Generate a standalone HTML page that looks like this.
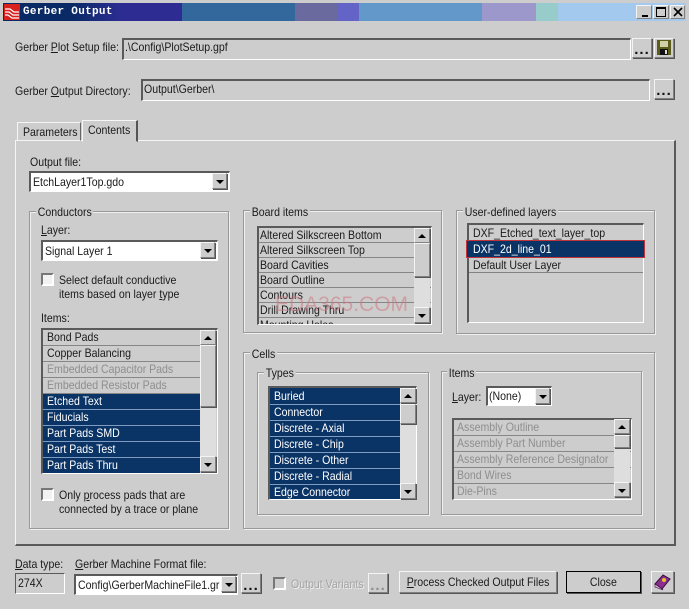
<!DOCTYPE html>
<html><head><meta charset="utf-8"><style>
html,body{margin:0;padding:0}
body{width:689px;height:609px;position:relative;overflow:hidden;background:#cdcdcd;font:12px/14px "Liberation Sans",sans-serif;color:#1a1a1a}
div{position:absolute;box-sizing:border-box}
.t{white-space:nowrap;transform:scaleX(.88);transform-origin:0 0}
.in{border:solid;border-width:2px 1px 1px 2px;border-color:#5a5a5a #fff #fff #5a5a5a;background:#cdcdcd}
.wh{background:#fff}
.btn{background:#cdcdcd;border:1px solid;border-color:#f4f4f4 #808080 #808080 #f4f4f4;box-shadow:1px 1px 0 #555}
.grp{border:1px solid #999;box-shadow:inset 1px 1px 0 #efefef,1px 1px 0 #efefef}
.lg{background:#cdcdcd;padding:0 2px;white-space:nowrap;transform:scaleX(.88);transform-origin:0 0}
.r{left:0;height:16px;width:100%;padding-left:4px;border-bottom:1px solid #868686;white-space:nowrap;line-height:15px;overflow:hidden}
.r b,.c b{font-weight:normal;display:inline-block;transform:scaleX(.88);transform-origin:0 0}
.c{white-space:nowrap;text-align:center;line-height:20px}
.c b{transform-origin:50% 0}
.s{background:#0b3466;color:#fff;border-bottom:1px solid #7f9cc0}
.d{color:#8e8e8e}
.up,.dn{position:absolute;left:50%;margin-left:-4px;width:0;height:0;border-left:4px solid transparent;border-right:4px solid transparent}
.up{top:5px;border-bottom:4px solid #000}
.dn{top:6px;border-top:4px solid #000}
.tr{background:#dedede}
.cb{width:13px;height:13px;border:2px solid;border-color:#777 #fff #fff #777;background:#f2f2f2}
u{text-decoration:underline}
.dots{font:bold 15px/13px "Liberation Sans",sans-serif;text-align:center;color:#111;letter-spacing:1px}
</style></head><body>

<!-- title bar -->
<div style="left:3px;top:3px;width:683px;height:18px;background:linear-gradient(90deg,#0a2a66 0,#0a2a66 70px,#2c2c92 117px,#2c2c92 179px,#33689c 179px,#33689c 292px,#6a6a9e 292px,#6a6a9e 335px,#6464c8 335px,#6464c8 356px,#6398cb 356px,#6398cb 479px,#9c98cc 479px,#9c98cc 533px,#98ccca 533px,#98ccca 555px,#a3c9ee 555px)"></div>
<svg style="position:absolute;left:4px;top:4px" width="16" height="16" viewBox="0 0 16 16"><rect width="16" height="16" fill="#d8201c"/><path d="M1 5h5l4 3h5M1 8h4l4 3h6M1 11h3l4 3h7" stroke="#fff" stroke-width="1.2" fill="none"/></svg>
<div style="left:23px;top:5px;white-space:nowrap;font:bold 11px/14px 'Liberation Mono',monospace;color:#fff;letter-spacing:.3px">Gerber Output</div>
<div class="btn" style="left:636px;top:5px;width:16px;height:14px;box-shadow:none"><div style="left:5px;top:9px;width:6px;height:2px;background:#000"></div></div>
<div class="btn" style="left:653px;top:5px;width:16px;height:14px;box-shadow:none"><div style="left:2px;top:1px;width:10px;height:10px;border:1px solid #000;border-top:2px solid #000"></div></div>
<div class="btn" style="left:670px;top:5px;width:15px;height:14px;box-shadow:none"><svg style="position:absolute;left:2px;top:1px" width="10" height="10"><path d="M1 1l8 8M9 1l-8 8" stroke="#000" stroke-width="1.6"/></svg></div>

<!-- top fields -->
<div class="t" style="left:15px;top:40px">Gerber <u>P</u>lot Setup file:</div>
<div class="in" style="left:122px;top:38px;width:509px;height:22px"></div>
<div class="t" style="left:125px;top:40px">.\Config\PlotSetup.gpf</div>
<div class="btn dots" style="left:632px;top:38px;width:20px;height:20px;padding-top:4px">...</div>
<div class="btn" style="left:654px;top:38px;width:20px;height:20px"></div>
<svg style="position:absolute;left:657px;top:40px" width="15" height="15" viewBox="0 0 15 15"><rect width="14" height="15" fill="#5c5c1c"/><rect x="3" y="1" width="8" height="6" fill="#cfcfa8"/><rect x="3" y="9" width="8" height="6" fill="#111"/><rect x="8" y="10" width="2" height="4" fill="#ddd"/></svg>

<div class="t" style="left:15px;top:84px">Gerber <u>O</u>utput Directory:</div>
<div class="in" style="left:141px;top:79px;width:509px;height:22px"></div>
<div class="t" style="left:144px;top:82px">Output\Gerber\</div>
<div class="btn dots" style="left:654px;top:79px;width:20px;height:20px;padding-top:4px">...</div>

<!-- tab panel -->
<div style="left:15px;top:140px;width:661px;height:406px;border:1px solid;border-color:#f6f6f6 #5a5a5a #5a5a5a #f6f6f6;border-width:1px 2px 2px 1px"></div>
<div style="left:17px;top:122px;width:64px;height:19px;border:1px solid;border-color:#f6f6f6 #666 #f6f6f6 #f6f6f6;background:#cdcdcd"></div>
<div class="t" style="left:23px;top:125px">Parameters</div>
<div style="left:82px;top:120px;width:56px;height:22px;border:1px solid;border-color:#f6f6f6 #555 #cdcdcd #f6f6f6;border-right-width:2px;background:#cdcdcd"></div>
<div class="t" style="left:88px;top:123px">Contents</div>

<!-- output file -->
<div class="t" style="left:30px;top:155px">Output file:</div>
<div class="in wh" style="left:29px;top:171px;width:201px;height:21px"></div>
<div class="t" style="left:33px;top:175px">EtchLayer1Top.gdo</div>
<div class="btn" style="left:212px;top:173px;width:15px;height:16px"><i class="dn"></i></div>

<!-- conductors -->
<div class="grp" style="left:29px;top:211px;width:200px;height:318px"></div>
<div class="lg" style="left:36px;top:205px">Conductors</div>
<div class="t" style="left:41px;top:223px"><u>L</u>ayer:</div>
<div class="in wh" style="left:41px;top:240px;width:177px;height:21px"></div>
<div class="t" style="left:45px;top:244px">Signal Layer 1</div>
<div class="btn" style="left:200px;top:242px;width:15px;height:16px"><i class="dn"></i></div>
<div class="cb" style="left:41px;top:273px"></div>
<div class="t" style="left:59px;top:273px">Select default conductive<br>items based on layer <u>t</u>ype</div>
<div class="t" style="left:41px;top:311px">Items:</div>

<div class="in" style="left:41px;top:328px;width:177px;height:146px;overflow:hidden">
<div style="left:0;top:0;width:157px;height:144px;overflow:hidden">
<div class="r" style="top:0"><b>Bond Pads</b></div>
<div class="r" style="top:16px"><b>Copper Balancing</b></div>
<div class="r d" style="top:32px"><b>Embedded Capacitor Pads</b></div>
<div class="r d" style="top:48px"><b>Embedded Resistor Pads</b></div>
<div class="r s" style="top:64px"><b>Etched Text</b></div>
<div class="r s" style="top:80px"><b>Fiducials</b></div>
<div class="r s" style="top:96px"><b>Part Pads SMD</b></div>
<div class="r s" style="top:112px"><b>Part Pads Test</b></div>
<div class="r s" style="top:128px;height:16px"><b>Part Pads Thru</b></div>
</div>
</div>
<div class="tr" style="left:200px;top:330px;width:16px;height:142px"></div>
<div class="btn" style="left:200px;top:330px;width:16px;height:15px"><i class="up"></i></div>
<div class="btn" style="left:200px;top:345px;width:16px;height:62px"></div>
<div class="btn" style="left:200px;top:456px;width:16px;height:16px"><i class="dn"></i></div>

<div class="cb" style="left:41px;top:488px"></div>
<div class="t" style="left:59px;top:488px">Only <u>p</u>rocess pads that are<br>connected by a trace or plane</div>

<!-- board items -->
<div class="grp" style="left:243px;top:210px;width:199px;height:123px"></div>
<div class="lg" style="left:250px;top:205px">Board items</div>
<div class="in" style="left:257px;top:226px;width:175px;height:99px;overflow:hidden">
<div class="r" style="top:0;height:15px;line-height:14px;padding-left:1px"><b>Altered Silkscreen Bottom</b></div>
<div class="r" style="top:15px;height:15px;line-height:14px;padding-left:1px"><b>Altered Silkscreen Top</b></div>
<div class="r" style="top:30px;height:15px;line-height:14px;padding-left:1px"><b>Board Cavities</b></div>
<div class="r" style="top:45px;height:15px;line-height:14px;padding-left:1px"><b>Board Outline</b></div>
<div class="r" style="top:60px;height:15px;line-height:14px;padding-left:1px"><b>Contours</b></div>
<div class="r" style="top:75px;height:15px;line-height:14px;padding-left:1px"><b>Drill Drawing Thru</b></div>
<div class="r" style="top:90px;height:15px;line-height:14px;padding-left:1px"><b>Mounting Holes</b></div>
</div>
<div class="tr" style="left:414px;top:228px;width:16px;height:95px"></div>
<div class="btn" style="left:414px;top:228px;width:16px;height:15px"><i class="up"></i></div>
<div class="btn" style="left:414px;top:243px;width:16px;height:34px"></div>
<div class="btn" style="left:414px;top:307px;width:16px;height:16px"><i class="dn"></i></div>
<div class="t" style="left:275px;top:293px;font-size:21px;line-height:24px;transform:none;color:rgba(205,120,130,.55)">EDA365.COM</div>

<!-- user defined -->
<div class="grp" style="left:456px;top:210px;width:199px;height:124px"></div>
<div class="lg" style="left:463px;top:205px">User-defined layers</div>
<div class="in" style="left:467px;top:223px;width:177px;height:100px"></div>
<div class="t" style="left:473px;top:226px">DXF_Etched_text_layer_top</div>
<div style="left:469px;top:256px;width:174px;height:1px;background:#828282"></div>
<div style="left:466px;top:240px;width:179px;height:18px;background:#0b3466;border:1px solid #c0343c"></div>
<div class="t" style="left:473px;top:242px;color:#fff">DXF_2d_line_01</div>
<div class="t" style="left:473px;top:258px">Default User Layer</div>
<div style="left:469px;top:272px;width:174px;height:1px;background:#828282"></div>

<!-- cells -->
<div class="grp" style="left:243px;top:352px;width:412px;height:177px"></div>
<div class="lg" style="left:250px;top:347px">Cells</div>
<div class="grp" style="left:257px;top:372px;width:172px;height:143px"></div>
<div class="lg" style="left:264px;top:366px">Types</div>
<div class="in" style="left:268px;top:386px;width:149px;height:114px;overflow:hidden">
<div style="left:0;top:0;width:130px;height:112px;overflow:hidden;background:#0b3466">
<div class="r s" style="top:1px"><b>Buried</b></div>
<div class="r s" style="top:17px"><b>Connector</b></div>
<div class="r s" style="top:33px"><b>Discrete - Axial</b></div>
<div class="r s" style="top:49px"><b>Discrete - Chip</b></div>
<div class="r s" style="top:65px"><b>Discrete - Other</b></div>
<div class="r s" style="top:81px"><b>Discrete - Radial</b></div>
<div class="r s" style="top:97px"><b>Edge Connector</b></div>
</div>
</div>
<div class="tr" style="left:400px;top:388px;width:16px;height:111px"></div>
<div class="btn" style="left:400px;top:388px;width:16px;height:15px"><i class="up"></i></div>
<div class="btn" style="left:400px;top:404px;width:16px;height:20px"></div>
<div class="btn" style="left:400px;top:483px;width:16px;height:16px"><i class="dn"></i></div>

<div class="grp" style="left:441px;top:371px;width:201px;height:144px"></div>
<div class="lg" style="left:447px;top:366px">Items</div>
<div class="t" style="left:452px;top:390px"><u>L</u>ayer:</div>
<div class="in wh" style="left:486px;top:386px;width:66px;height:20px"></div>
<div class="t" style="left:489px;top:389px">(None)</div>
<div class="btn" style="left:535px;top:388px;width:15px;height:16px"><i class="dn"></i></div>
<div class="in" style="left:452px;top:418px;width:180px;height:82px;overflow:hidden">
<div class="r d" style="top:0;padding-left:3px"><b>Assembly Outline</b></div>
<div class="r d" style="top:16px;padding-left:3px"><b>Assembly Part Number</b></div>
<div class="r d" style="top:32px;padding-left:3px"><b>Assembly Reference Designator</b></div>
<div class="r d" style="top:48px;padding-left:3px"><b>Bond Wires</b></div>
<div class="r d" style="top:64px;padding-left:3px;border:0"><b>Die-Pins</b></div>
</div>
<div class="tr" style="left:614px;top:419px;width:16px;height:78px"></div>
<div class="btn" style="left:614px;top:419px;width:16px;height:15px"><i class="up"></i></div>
<div class="btn" style="left:614px;top:435px;width:16px;height:13px"></div>
<div class="btn" style="left:614px;top:482px;width:16px;height:15px"><i class="dn"></i></div>

<!-- bottom -->
<div class="t" style="left:15px;top:557px"><u>D</u>ata type:</div>
<div class="in" style="left:15px;top:573px;width:50px;height:21px;border-width:1px"></div>
<div class="t" style="left:18px;top:576px">274X</div>
<div class="t" style="left:75px;top:557px"><u>G</u>erber Machine Format file:</div>
<div class="in wh" style="left:74px;top:574px;width:164px;height:21px;overflow:hidden"></div>
<div class="t" style="left:78px;top:578px;width:162px;overflow:hidden">Config\GerberMachineFile1.gr</div>
<div class="btn" style="left:221px;top:576px;width:15px;height:16px"><i class="dn"></i></div>
<div class="btn dots" style="left:241px;top:573px;width:20px;height:20px;padding-top:5px">...</div>
<div class="cb" style="left:273px;top:577px;background:#cdcdcd"></div>
<div class="t" style="left:291px;top:577px;color:#a4a4a4;text-shadow:1px 1px 0 #eee">Output Variants</div>
<div class="btn dots" style="left:368px;top:573px;width:20px;height:20px;padding-top:5px;color:#8e8e8e">...</div>
<div class="btn c" style="left:399px;top:571px;width:158px;height:22px"><b style="margin-left:-3px"><u>P</u>rocess Checked Output Files</b></div>
<div class="btn c" style="left:566px;top:571px;width:75px;height:22px;outline:1px solid #000;outline-offset:-1px"><b>Close</b></div>
<div class="btn" style="left:651px;top:571px;width:23px;height:22px"></div>
<svg style="position:absolute;left:653px;top:573px" width="19" height="18" viewBox="0 0 19 18"><path d="M2 11L10 2l7 4-8 10z" fill="#8a2d8c" stroke="#3a0a40"/><path d="M2 11l7 5 1 1-8-3z" fill="#d9b8dc" stroke="#3a0a40" stroke-width=".6"/><circle cx="11" cy="7" r="2" fill="#e6c02a"/></svg>

</body></html>
